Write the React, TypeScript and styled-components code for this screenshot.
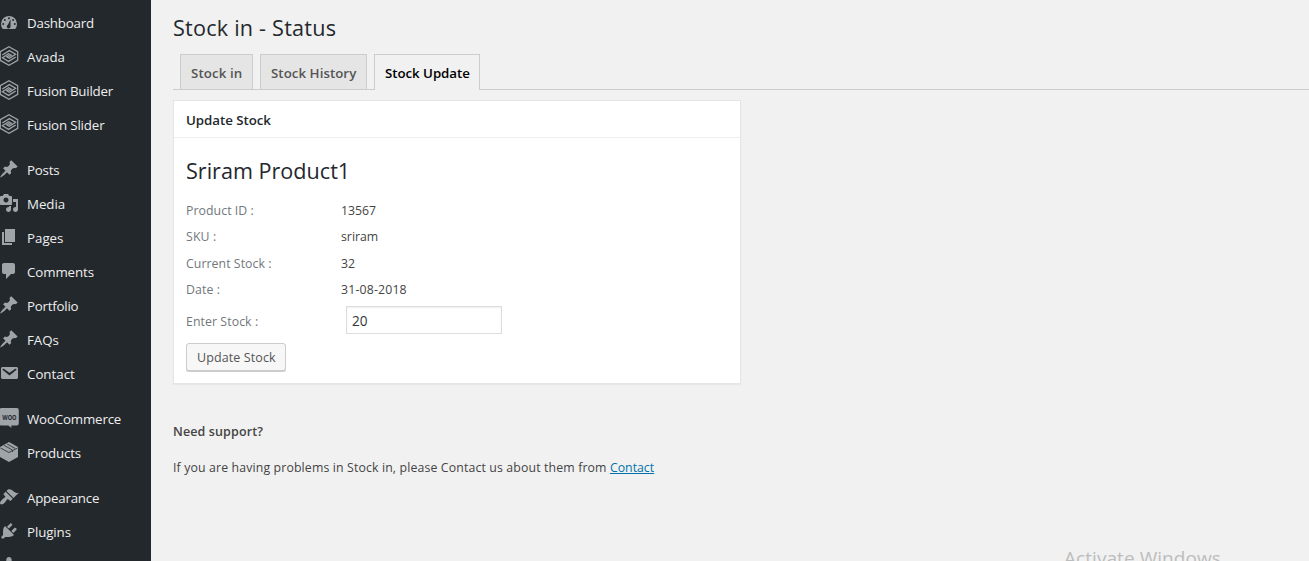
import React from "react";
import styled, { createGlobalStyle } from "styled-components";

const GlobalStyle = createGlobalStyle`
  * { box-sizing: border-box; }
  html, body { margin: 0; padding: 0; height: 100%; overflow: hidden; }
  body {
    background: #f1f1f1;
    color: #444;
    font-family: "Open Sans", "Noto Sans", sans-serif;
    font-size: 12.3px;
  }
`;

const Page = styled.div`
  display: flex;
  height: 561px;
  overflow: hidden;
  position: relative;
`;

const Sidebar = styled.nav`
  flex: none;
  width: 151px;
  height: 561px;
  overflow: hidden;
  padding-top: 5px;
  background: #23282d;
`;

const MenuItem = styled.a<{ $gap?: boolean }>`
  display: flex;
  align-items: flex-start;
  height: 34px;
  margin-top: ${(p) => (p.$gap ? 11 : 0)}px;
  padding-top: 7px;
  color: #eee;
  text-decoration: none;
`;

const IconBox = styled.svg`
  flex: none;
  width: 20px;
  height: 20px;
  margin-left: -1px;
  fill: #9fa4a9;
`;

const MenuLabel = styled.span<{ $track: number }>`
  margin-left: 8px;
  font-size: 13.3px;
  line-height: 22px;
  white-space: nowrap;
  letter-spacing: ${(p) => p.$track}px;
`;

const Content = styled.main`
  flex: 1;
  min-width: 0;
  padding: 12px 0 0 22px;
`;

const Title = styled.h1`
  margin: 0;
  height: 42px;
  font-size: 21.6px;
  font-weight: 400;
  line-height: 32px;
  color: #23282d;
  letter-spacing: 0.22px;
`;

const Tabs = styled.div`
  display: flex;
  height: 36px;
  padding-left: 7px;
  gap: 7px;
  border-bottom: 1px solid #ccc;
`;

const Tab = styled.a<{ $active?: boolean; $w: number; $track: number }>`
  width: ${(p) => p.$w}px;
  height: ${(p) => (p.$active ? 36 : 35)}px;
  padding-left: 10px;
  border: 1px solid #ccc;
  border-bottom: 0;
  background: ${(p) => (p.$active ? "#f1f1f1" : "#e5e5e5")};
  color: ${(p) => (p.$active ? "#000" : "#555")};
  font-size: 13.3px;
  font-weight: 600;
  line-height: 36px;
  white-space: nowrap;
  letter-spacing: ${(p) => p.$track}px;
`;

const Card = styled.section`
  width: 568px;
  height: 284px;
  margin-top: 10px;
  background: #fff;
  border: 1px solid #e5e5e5;
  box-shadow: 0 1px 1px rgba(0, 0, 0, 0.04);
`;

const CardHeader = styled.h2`
  margin: 0;
  height: 37px;
  padding-left: 12px;
  border-bottom: 1px solid #eee;
  color: #23282d;
  font-size: 13.3px;
  font-weight: 600;
  line-height: 38px;
  letter-spacing: -0.04px;
`;

const CardBody = styled.div`
  padding: 17px 12px 0;
`;

const ProductName = styled.h3`
  margin: 0;
  height: 42px;
  color: #23282d;
  font-size: 21.6px;
  font-weight: 400;
  line-height: 32px;
`;

const Field = styled.div<{ $h: number }>`
  display: flex;
  align-items: center;
  height: ${(p) => p.$h}px;
`;

const FieldLabel = styled.label<{ $track: number }>`
  width: 155px;
  color: #72777c;
  letter-spacing: ${(p) => p.$track}px;
`;

const FieldValue = styled.span<{ $track: number }>`
  color: #444;
  letter-spacing: ${(p) => p.$track}px;
`;

const StockInput = styled.input`
  width: 156px;
  height: 28px;
  margin: 0 0 2px 5px;
  padding: 2px 5px;
  border: 1px solid #ddd;
  border-radius: 0;
  outline: 0;
  background: #fff;
  box-shadow: inset 0 1px 2px rgba(0, 0, 0, 0.07);
  color: #32373c;
  font: 13.6px "Open Sans", "Noto Sans", sans-serif;
`;

const Button = styled.button`
  display: block;
  width: 100px;
  height: 28px;
  margin: 3px 0 0;
  padding: 0 0 0 10px;
  border: 1px solid #ccc;
  border-radius: 3px;
  background: #f7f7f7;
  box-shadow: 0 1px 0 #ccc;
  color: #555;
  font: 12.5px/28px "Open Sans", "Noto Sans", sans-serif;
  letter-spacing: 0.1px;
  text-align: left;
  white-space: nowrap;
`;

const SupportTitle = styled.h4`
  margin: 38px 0 0;
  font-size: 12.5px;
  font-weight: 600;
  line-height: 20px;
  letter-spacing: 0.12px;
`;

const SupportText = styled.p`
  margin: 16px 0 0;
  line-height: 20px;
  white-space: nowrap;
  letter-spacing: 0.14px;
`;

const Link = styled.a`
  color: #0073aa;
  text-decoration: underline;
  letter-spacing: 0;
`;

const Watermark = styled.div`
  position: absolute;
  left: 1064px;
  top: 544px;
  color: #bdbdbd;
  font-size: 19px;
  line-height: 28px;
  letter-spacing: 0.06px;
  white-space: nowrap;
`;

type IconName =
  | "dashboard" | "fusion" | "pin" | "media" | "pages" | "comment"
  | "mail" | "woo" | "box" | "brush" | "plug" | "user";

const shapes: Record<IconName, React.ReactNode> = {
  dashboard: (
    <>
      <path d="M3.8 17h12.4A8 8 0 1 0 3.8 17z" />
      <g fill="#23282d">
        <circle cx="10" cy="6.2" r="1" />
        <circle cx="5.9" cy="7.9" r="1" />
        <circle cx="14.1" cy="7.9" r="1" />
        <circle cx="4.2" cy="12" r="1" />
        <circle cx="15.8" cy="12" r="1" />
        <path d="M11.6 7.2l-.1 6.6a1.9 1.9 0 1 1-2.6-1.1z" />
      </g>
    </>
  ),
  fusion: (
    <g fill="none" stroke="#9fa4a9" strokeWidth="1.25">
      <path d="M10 .7l8.700 4.900v8.800L10 19.300l-8.700-4.900V5.600z" />
      <path d="M3.300 9L10.400 4.600l6.200 3.700-6.200 4-2.700-1.500 2.600-1.500" />
      <path d="M16.700 11L9.600 15.400l-6.200-3.700 6.200-4 2.700 1.500-2.600 1.500" />
    </g>
  ),
  pin: (
    <path d="M10.44 3.02l1.82-1.82 6.36 6.35-1.83 1.82c-1.05-.68-2.48-.57-3.41.36l-.75.75c-.92.93-1.04 2.35-.35 3.41l-1.83 1.82-2.41-2.41-2.8 2.79c-.42.42-3.38 2.71-3.8 2.29s1.86-3.39 2.28-3.81l2.79-2.79L4.1 9.36l1.83-1.82c1.05.69 2.48.57 3.4-.36l.75-.75c.93-.92 1.05-2.35.36-3.41z" />
  ),
  media: (
    <path d="M13 11V4c0-.55-.45-1-1-1h-1.67L9 1H5L3.67 3H2c-.55 0-1 .45-1 1v7c0 .55.45 1 1 1h10c.55 0 1-.45 1-1zM7 4.5c1.38 0 2.5 1.12 2.5 2.5S8.38 9.5 7 9.5 4.5 8.38 4.5 7 5.62 4.5 7 4.5zM14 6h5v10.5c0 1.38-1.12 2.5-2.5 2.5S14 17.88 14 16.5s1.12-2.5 2.5-2.5c.17 0 .34.02.5.05V9h-3V6zm-4 8.05V13h2v3.5c0 1.38-1.12 2.5-2.5 2.5S7 17.88 7 16.5 8.12 14 9.5 14c.17 0 .34.02.5.05z" />
  ),
  pages: <path d="M6 15V2h10v13H6zm-1 1h8v2H3V5h2v11z" />,
  comment: (
    <path d="M5 2h9c1.100 0 2 .9 2 2v7c0 1.100-.9 2-2 2h-2l-5 5v-5H5c-1.100 0-2-.9-2-2V4c0-1.100.9-2 2-2z" />
  ),
  mail: (
    <path d="M3.87 4h13.25C18.37 4 19 4.59 19 5.79v8.42c0 1.19-.63 1.79-1.88 1.79H3.87c-1.25 0-1.88-.6-1.88-1.79V5.79c0-1.2.63-1.79 1.88-1.79zm6.62 8.6l6.74-5.53c.24-.2.43-.66.13-1.07-.29-.41-.82-.42-1.17-.17l-5.7 3.86L4.8 5.83c-.35-.25-.88-.24-1.17.17-.3.41-.11.87.13 1.07z" />
  ),
  woo: (
    <>
      <path d="M2.500 0h15.300a2 2 0 0 1 2 2v13.500a2 2 0 0 1-2 2h-5.600l.300 2.500-3.200-2.500H2.500a2 2 0 0 1-2-2V2a2 2 0 0 1 2-2z" />
      <text x="10.4" y="11.8" textAnchor="middle" fontSize="7.6" fontWeight="700" fill="#23282d" fontFamily="Open Sans, sans-serif" textLength="14.400" lengthAdjust="spacingAndGlyphs">WOO</text>
    </>
  ),
  box: (
    <>
      <path d="M10 0l9 5v10l-9 5-9-5V5z" />
      <path d="M1.500 6L10 10.500l8.500-4.500M5.200 3.400l8.200 4.600v2M8.200 2l8 4.500" fill="none" stroke="#23282d" strokeWidth=".8" />
    </>
  ),
  brush: (
    <path d="M14.48 11.06L7.41 3.99l1.5-1.5c.5-.56 2.3-.47 3.51.32 1.21.8 1.43 1.28 2.91 2.1 1.18.64 2.45 1.26 4.45.85zm-.71.71L6.7 4.7 4.93 6.47c-.39.39-.39 1.02 0 1.41l1.06 1.06c.39.39.39 1.03 0 1.42-.6.6-1.43 1.11-2.21 1.69-.35.26-.7.53-1.01.84C1.43 14.23.4 16.08 1.4 17.07c.99 1 2.84-.03 4.18-1.36.31-.31.58-.66.85-1.02.57-.78 1.08-1.61 1.69-2.21.39-.39 1.02-.39 1.41 0l1.06 1.06c.39.39 1.02.39 1.41 0z" />
  ),
  plug: (
    <path d="M13.11 4.36L9.87 7.6 8 5.73l3.24-3.24c.35-.34 1.05-.2 1.56.32.52.51.66 1.21.31 1.55zm-8 1.77l.91-1.12 9.01 9.01-1.19.84c-.71.71-2.63 1.16-3.82 1.16H6.14L4.9 17.26c-.59.59-1.54.59-2.12 0-.59-.58-.59-1.53 0-2.12l1.24-1.24v-3.88c0-1.13.4-3.19 1.09-3.89zm7.26 3.97l3.24-3.24c.34-.35 1.04-.21 1.55.31.52.51.66 1.21.31 1.55l-3.24 3.25z" />
  ),
  user: (
    <path d="M10 9.25c-2.27 0-2.73-3.44-2.73-3.44C7 4.02 7.82 2 9.97 2c2.16 0 2.98 2.02 2.71 3.81 0 0-.41 3.44-2.68 3.44z" />
  ),
};

const menu: { label: string; icon: IconName; gap?: boolean; track: number }[] = [
  { label: "Dashboard", icon: "dashboard", track: -0.2 },
  { label: "Avada", icon: "fusion", track: 0 },
  { label: "Fusion Builder", icon: "fusion", track: -0.2 },
  { label: "Fusion Slider", icon: "fusion", track: -0.15 },
  { label: "Posts", icon: "pin", gap: true, track: -0.2 },
  { label: "Media", icon: "media", track: -0.05 },
  { label: "Pages", icon: "pages", track: 0 },
  { label: "Comments", icon: "comment", track: -0.1 },
  { label: "Portfolio", icon: "pin", track: -0.22 },
  { label: "FAQs", icon: "pin", track: 0 },
  { label: "Contact", icon: "mail", track: 0 },
  { label: "WooCommerce", icon: "woo", gap: true, track: -0.17 },
  { label: "Products", icon: "box", track: -0.15 },
  { label: "Appearance", icon: "brush", gap: true, track: -0.22 },
  { label: "Plugins", icon: "plug", track: -0.1 },
  { label: "", icon: "user", track: 0 },
];

const fields = [
  { label: "Product ID :", value: "13567", h: 26, lt: 0.06, vt: 0 },
  { label: "SKU :", value: "sriram", h: 27, lt: 0.15, vt: 0 },
  { label: "Current Stock :", value: "32", h: 26, lt: 0.06, vt: 0 },
  { label: "Date :", value: "31-08-2018", h: 26, lt: 0.1, vt: 0.16 },
];

export default function App() {
  return (
    <Page>
      <GlobalStyle />
      <Sidebar>
        {menu.map((m, i) => (
          <MenuItem key={i} $gap={m.gap}>
            <IconBox viewBox="0 0 20 20" overflow="visible">{shapes[m.icon]}</IconBox>
            <MenuLabel $track={m.track}>{m.label}</MenuLabel>
          </MenuItem>
        ))}
      </Sidebar>
      <Content>
        <Title>Stock in - Status</Title>
        <Tabs>
          <Tab $w={73} $track={0.1}>Stock in</Tab>
          <Tab $w={107} $track={0.04}>Stock History</Tab>
          <Tab $w={106} $track={-0.05} $active>Stock Update</Tab>
        </Tabs>
        <Card>
          <CardHeader>Update Stock</CardHeader>
          <CardBody>
            <ProductName>Sriram Product1</ProductName>
            {fields.map((f) => (
              <Field key={f.label} $h={f.h}>
                <FieldLabel $track={f.lt}>{f.label}</FieldLabel>
                <FieldValue $track={f.vt}>{f.value}</FieldValue>
              </Field>
            ))}
            <Field $h={38}>
              <FieldLabel $track={0.08}>Enter Stock :</FieldLabel>
              <StockInput defaultValue="20" />
            </Field>
            <Button>Update Stock</Button>
          </CardBody>
        </Card>
        <SupportTitle>Need support?</SupportTitle>
        <SupportText>
          If you are having problems in Stock in, please Contact us about them from <Link>Contact</Link>
        </SupportText>
      </Content>
      <Watermark>Activate Windows</Watermark>
    </Page>
  );
}
